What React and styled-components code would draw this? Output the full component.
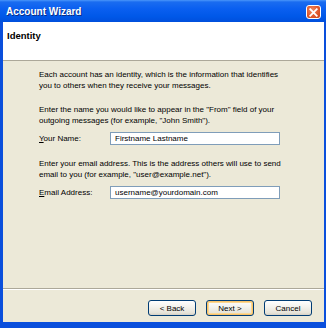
import React from 'react';
import styled, { createGlobalStyle } from 'styled-components';

const GlobalStyle = createGlobalStyle`
    html, body {
        margin: 0;
        padding: 0;
        background: #ffffff;
    }
    body {
        font-family: "Liberation Sans", Arial, sans-serif;
    }
`;

function App() {
    return (
        <>
            <GlobalStyle />
            <Window>
                <TitleBar>
                    <Title>Account Wizard</Title>
                    <CloseButton aria-label="Close">
                        <svg width="9" height="9" viewBox="0 0 9 9">
                            <path d="M1.2 1.2 L7.8 7.8 M7.8 1.2 L1.2 7.8" stroke="#fff" strokeWidth="1.8" strokeLinecap="square" />
                        </svg>
                    </CloseButton>
                </TitleBar>
                <Frame>
                    <Header>
                        <PageTitle>Identity</PageTitle>
                    </Header>
                    <Body>
                        <Text>
                            Each account has an identity, which is the information that identifies<br />
                            you to others when they receive your messages.
                        </Text>
                        <Section>
                            <Text>
                                Enter the name you would like to appear in the "From" field of your<br />
                                outgoing messages (for example, "John Smith").
                            </Text>
                            <FieldRow>
                                <Label><u>Y</u>our Name:</Label>
                                <Input defaultValue="Firstname Lastname" />
                            </FieldRow>
                        </Section>
                        <Section>
                            <Text>
                                Enter your email address. This is the address others will use to send<br />
                                email to you (for example, "user@example.net").
                            </Text>
                            <FieldRow>
                                <Label><u>E</u>mail Address:</Label>
                                <Input defaultValue="username@yourdomain.com" />
                            </FieldRow>
                        </Section>
                    </Body>
                    <Footer>
                        <Button>&lt; Back</Button>
                        <Button $default>Next &gt;</Button>
                        <Button>Cancel</Button>
                    </Footer>
                </Frame>
            </Window>
        </>
    );
}

const Window = styled.div`
    width: 326px;
    height: 328px;
    display: flex;
    flex-direction: column;
    background: #0a4fdc;
`;

const TitleBar = styled.div`
    height: 22px;
    flex-shrink: 0;
    display: flex;
    align-items: center;
    justify-content: space-between;
    padding: 0 5px 0 6px;
    box-sizing: border-box;
    background: linear-gradient(#4a96fa 0, #1a6cf0 2px, #0a5ff0 40%, #0058e8 75%, #004fdc 100%);
`;

const Title = styled.span`
    color: #ffffff;
    font-weight: bold;
    font-size: 10px;
    text-shadow: 1px 1px 0 #0a2d86;
`;

const CloseButton = styled.div`
    width: 15px;
    height: 14px;
    box-sizing: border-box;
    border: 1px solid #ffffff;
    border-radius: 3px;
    background: radial-gradient(circle at 40% 35%, #f08a62 0, #e0592d 55%, #c4421a 100%);
    display: flex;
    align-items: center;
    justify-content: center;
    margin-top: 2px;
`;

const Frame = styled.div`
    flex: 1;
    display: flex;
    flex-direction: column;
    margin: 0 2px 6px 3px;
    background: #ece9d8;
`;

const Header = styled.div`
    height: 39px;
    flex-shrink: 0;
    background: #ffffff;
    border-bottom: 1px solid #aca899;
    padding: 8px 4px 0;
    box-sizing: border-box;
`;

const PageTitle = styled.div`
    font-weight: bold;
    font-size: 9.5px;
    color: #000000;
`;

const Body = styled.div`
    flex: 1;
    display: flex;
    flex-direction: column;
    gap: 14px;
    padding: 9px 0 0 36px;
    border-bottom: 1px solid #aca899;
    box-shadow: 0 1px 0 #ffffff;
`;

const Section = styled.div`
    display: flex;
    flex-direction: column;
    gap: 6px;
`;

const Text = styled.p`
    margin: 0;
    font-size: 8px;
    line-height: 10.5px;
    color: #000000;
    white-space: nowrap;
`;

const FieldRow = styled.div`
    display: flex;
    align-items: center;
`;

const Label = styled.label`
    width: 71px;
    font-size: 8px;
    color: #000000;
`;

const Input = styled.input`
    width: 170px;
    height: 13px;
    box-sizing: border-box;
    border: 1px solid #7f9db9;
    background: #ffffff;
    padding: 0 4px;
    font-family: "Liberation Sans", Arial, sans-serif;
    font-size: 8px;
    color: #000000;
    outline: none;
`;

const Footer = styled.div`
    height: 33px;
    flex-shrink: 0;
    display: flex;
    justify-content: flex-end;
    align-items: flex-start;
    gap: 10px;
    padding: 11px 12px 0 0;
    box-sizing: border-box;
`;

const Button = styled.button`
    width: 48px;
    height: 16px;
    box-sizing: border-box;
    border: 1px solid #003c74;
    border-radius: 3px;
    background: linear-gradient(#ffffff 0, #f4f3ee 40%, #e6e3d8 85%, #d6d0c5 100%);
    box-shadow: ${props => props.$default ? 'inset 0 0 0 1px #f9c36a, inset 0 0 0 2px #fbd894' : 'none'};
    font-family: "Liberation Sans", Arial, sans-serif;
    font-size: 8px;
    color: #000000;
    padding: 0;
`;

export default App;
